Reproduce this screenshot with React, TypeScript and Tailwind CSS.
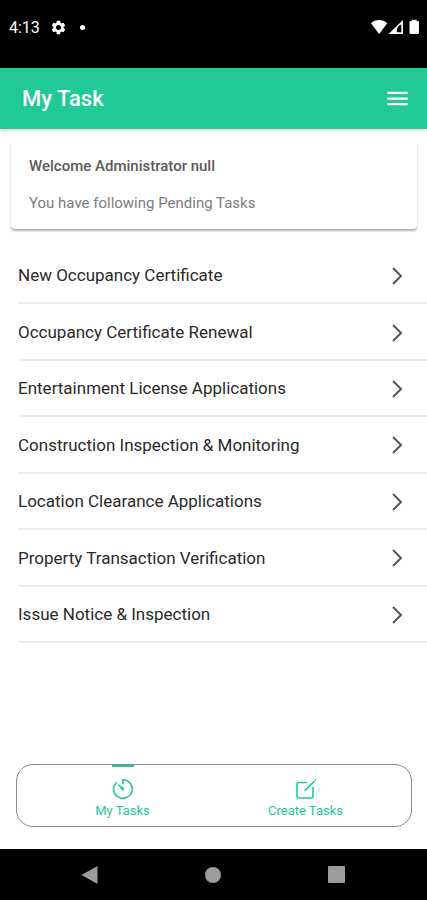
import { useState } from "react";
import { MdMenu, MdSettings } from "react-icons/md";

const GREEN = "#21c997";

const tasks = [
  "New Occupancy Certificate",
  "Occupancy Certificate Renewal",
  "Entertainment License Applications",
  "Construction Inspection & Monitoring",
  "Location Clearance Applications",
  "Property Transaction Verification",
  "Issue Notice & Inspection",
];

function StatusBar() {
  return (
    <div className="flex h-[68px] items-start justify-between bg-black pt-[17px] pr-[7px] pl-[9px] text-white">
      <div className="flex h-5 items-center">
        <span className="w-[41px] pt-px text-base">4:13</span>
        <MdSettings size={17} />
        <span className="ml-[13px] size-[5px] rounded-full bg-white" />
      </div>
      <svg width="49" height="20" viewBox="0 0 49 20" fill="#fff">
        <path d="M0 6.2C4.4 1.9 11.8 1.9 16.2 6.2L8.1 17Z" />
        <path
          fillRule="evenodd"
          d="M17.5 17L32 3V17ZM25.8 15.3H30.3V7.3C27.500 9 25.800 11 25.800 13Z"
        />
        <path d="M38.5 5.2Q38.5 4 39.7 4H40.8V2.8H45.6V4H46.8Q48 4 48 5.2V15.8Q48 17 46.8 17H39.7Q38.5 17 38.5 15.8Z" />
      </svg>
    </div>
  );
}

function TimerIcon() {
  return (
    <svg
      width="22"
      height="22"
      viewBox="0 0 22 22"
      fill="none"
      stroke={GREEN}
      strokeWidth="1.6"
      strokeLinecap="round"
      strokeLinejoin="round"
    >
      <path d="M4.300 4.500A9.300 9.300 0 1 0 11 1.700V5.800" />
      <path
        d="M6.6 6.8L12 10.500A1.200 1.200 0 0 1 10.500 12Z"
        fill={GREEN}
        strokeWidth="1"
      />
    </svg>
  );
}

function CreateIcon() {
  return (
    <svg
      width="22"
      height="22"
      viewBox="0 0 22 22"
      fill="none"
      stroke={GREEN}
      strokeWidth="1.6"
      strokeLinecap="round"
      strokeLinejoin="round"
    >
      <path d="M11.500 4.500H3.700Q2 4.500 2 6.200V18.300Q2 20 3.700 20H16.300Q18 20 18 18.300V9.500" />
      <path d="M10 12.500L18.800 3.600" />
      <path d="M20.100 2.200L20.400 1.900" />
    </svg>
  );
}

const tabs = [
  { label: "My Tasks", Icon: TimerIcon },
  { label: "Create Tasks", Icon: CreateIcon },
];

export default function App() {
  const [active, setActive] = useState("My Tasks");

  return (
    <div className="flex min-h-screen flex-col bg-white font-['Roboto',sans-serif]">
      <StatusBar />

      <header className="z-10 flex h-[61px] items-center justify-between bg-[#21c997] pr-4 pl-[22px] text-white shadow-[0_2px_3px_rgba(0,0,0,0.15)]">
        <h1 className="text-[22px] font-medium">My Task</h1>
        <button type="button" aria-label="Menu">
          <MdMenu size={27} />
        </button>
      </header>

      <main className="flex-1">
        <section className="mr-[10px] ml-[11px] mt-3 rounded bg-white px-[18px] pt-[15px] pb-4 text-[15px] leading-5 shadow-[0_2px_2px_rgba(0,0,0,0.3)]">
          <h2 className="font-medium text-[#5a5a5a]">
            Welcome Administrator null
          </h2>
          <p className="mt-[17px] text-[#7d7d7d]">
            You have following Pending Tasks
          </p>
        </section>

        <ul className="mt-[19px] grid min-h-[395px] auto-rows-fr pl-[18px]">
          {tasks.map((task) => (
            <li key={task} className="flex border-b-2 border-[#ededed]">
              <button
                type="button"
                className="flex flex-1 items-center justify-between pt-[2px] pr-[23px] text-left text-[17px] text-[#2a2a2a]"
              >
                {task}
                <svg width="14" height="20" viewBox="0 0 14 20" fill="none">
                  <path d="M3 2L11 10L3 18" stroke="#555" strokeWidth="2" />
                </svg>
              </button>
            </li>
          ))}
        </ul>
      </main>

      <nav className="mr-[15px] mb-[22px] ml-4 flex h-[63px] rounded-[17px] border border-[#8c8c8c] px-[14px]">
        {tabs.map(({ label, Icon }) => (
          <button
            key={label}
            type="button"
            onClick={() => setActive(label)}
            className="flex flex-1 flex-col items-center text-[13px] leading-4 text-[#21c997]"
          >
            <span
              className={`mb-[11px] h-[2px] w-[22px] ${
                active === label ? "bg-[#21c997]" : "bg-transparent"
              }`}
            />
            <Icon />
            <span className="mt-[3px]">{label}</span>
          </button>
        ))}
      </nav>

      <div className="flex h-[51px] items-center justify-between bg-black px-20">
        <button type="button" aria-label="Back">
          <svg width="18" height="20" viewBox="0 0 18 20">
            <path d="M17.5 1V19L1.5 10Z" fill="#9c9c9c" />
          </svg>
        </button>
        <button
          type="button"
          aria-label="Home"
          className="size-4 rounded-full bg-[#9c9c9c]"
        />
        <button
          type="button"
          aria-label="Recent apps"
          className="mr-[2px] size-[17px] rounded-[1px] bg-[#9c9c9c]"
        />
      </div>
    </div>
  );
}
